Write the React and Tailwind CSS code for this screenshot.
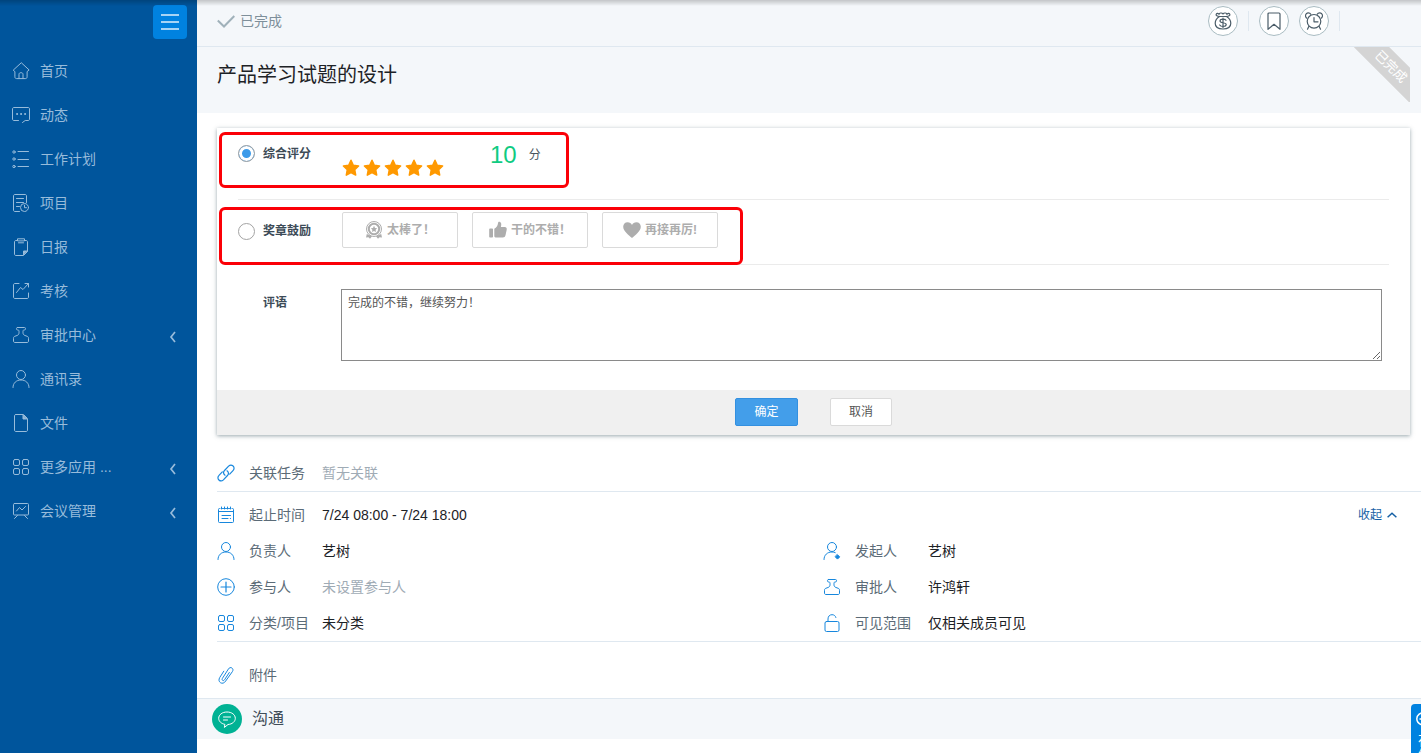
import React, { useState } from 'react';

const Icon = ({ size = 'size-[18px]', children, width = 1 }) => (
  <svg
    viewBox="0 0 18 18"
    className={`${size} shrink-0`}
    fill="none"
    stroke="currentColor"
    strokeWidth={width}
    strokeLinecap="round"
    strokeLinejoin="round"
    aria-hidden="true"
  >
    {children}
  </svg>
);

// Shapes shared by the sidebar and the task details
const shapes = {
  home: (
    <>
      <path d="M9 1 1.2 8.2l1.7 1.4v5.2c0 1.2.6 1.8 1.8 1.8h8.6c1.2 0 1.8-.6 1.8-1.8V9.6l1.7-1.4z" />
      <path d="M7 16.4v-4.2c0-.9.7-1.5 2-1.5s2 .6 2 1.5v4.2" />
    </>
  ),
  feed: (
    <>
      <path d="M6.5 14.500H2C1 14.500 .5 14 .5 13V3C.5 2 1 1.500 2 1.500h14c1 0 1.500.5 1.500 1.500v10c0 1-.5 1.500-1.500 1.500h-2.800L10.500 16.500" />
      <path d="M5 8h.2M9 8h.2M13 8h.2" strokeWidth="1.800" />
    </>
  ),
  plan: (
    <>
      <circle cx="2" cy="2" r="1.200" />
      <circle cx="2" cy="9" r="1.200" />
      <circle cx="2" cy="16.500" r="1.200" />
      <path d="M6 1.500h10.500M6 9.500h10.500M6 16.500h10.500" />
    </>
  ),
  project: (
    <>
      <path d="M7.500 17.500H3c-1 0-1.500-.5-1.500-1.500V2C1.500 1 2 .5 3 .5h10c1 0 1.500.5 1.500 1.500v6.500" />
      <path d="M4.500 4.500h7M4.500 8.500h7M4.500 12.500h3" />
      <circle cx="12.500" cy="13.500" r="4" />
      <path d="M12.500 11.200v2.500h2" />
    </>
  ),
  daily: (
    <>
      <path d="M5.500 2.500H4C3 2.500 2.500 3 2.500 4v12c0 1 .5 1.500 1.500 1.500h7.500l4-4V4c0-1-.5-1.500-1.500-1.500h-1.500" />
      <path d="M5.500 2.500V.8h7v1.700zM6.500 4.800h5" />
      <path d="M11.500 16.500v-3.500H15z" fill="currentColor" />
    </>
  ),
  review: (
    <>
      <path d="M7 1.500H3C2 1.500 1.500 2 1.500 3v12c0 1 .5 1.500 1.500 1.500h12c1 0 1.500-.5 1.500-1.500v-4" />
      <path d="m4.500 10.500 4-5 2.500 2 5.500-6M13 1.500h3.500V5" />
    </>
  ),
  approve: (
    <path d="M5.500 1.500h7c.7 0 1 .4 1 1.200 0 .9-.4 1.300-1.100 1.300-1 0-1.400.3-1.400 1.300v1.500c0 1.400.7 2.200 2 2.700l2.200.8c1 .4 1.300.9 1.300 2v2.700c0 1-.5 1.500-1.500 1.500H3c-1 0-1.500-.5-1.500-1.500v-2.700c0-1.100.3-1.600 1.300-2L5 9.500c1.300-.5 2-1.300 2-2.700V5.300C7 4.300 6.600 4 5.600 4c-.7 0-1.100-.4-1.100-1.300 0-.8.300-1.200 1-1.200z" />
  ),
  user: (
    <>
      <circle cx="9" cy="5" r="4.500" />
      <path d="M1 17.500c0-4.500 3.300-7.500 8-7.500s8 3 8 7.500" />
    </>
  ),
  file: (
    <>
      <path d="M4 .5h7.500l4 4V16c0 1-.5 1.500-1.500 1.500H4c-1 0-1.500-.5-1.500-1.500V2C2.500 1 3 .5 4 .5z" />
      <path d="M11 1.500v3.500h3.500z" fill="currentColor" />
    </>
  ),
  apps: (
    <>
      <rect x="1.500" y="1.500" width="6" height="6" rx="1.500" />
      <rect x="10.500" y="1.500" width="6" height="6" rx="1.500" />
      <rect x="1.500" y="10.500" width="6" height="6" rx="1.500" />
      <rect x="10.500" y="10.500" width="6" height="6" rx="1.500" />
    </>
  ),
  meeting: (
    <>
      <rect x="1.500" y="1.500" width="15" height="11.500" rx="1" />
      <path d="m4.500 9 3-3.500L10 8l3.500-3.500M5.500 13.500l-3 3M12.500 13.500l3 3" />
    </>
  ),
  link: (
    <g strokeWidth="1.200">
      <path d="M8 11.200c-1.800-1.300-1.900-3.300-.5-4.700l4.100-4.300c1.400-1.400 3.200-1.400 4.500-.2s1.300 3.200-.1 4.600l-3.300 3.500" />
      <path d="M10 6.800c1.800 1.300 1.900 3.300.5 4.700l-4.100 4.300C5 17.200 3.200 17.200 1.900 16s-1.300-3.200.1-4.600l3.300-3.500" />
    </g>
  ),
  calendar: (
    <>
      <path d="M3 2.500h-.5c-.7 0-1 .3-1 1v12c0 .7.3 1 1 1h13c.7 0 1-.3 1-1v-12c0-.7-.3-1-1-1H15M5.500 2.500h1M8.500 2.500h1M11.500 2.500h1M4.500 1v2M7.500 1v2M10.500 1v2M13.500 1v2M1.500 5.500h15" />
      <path d="M5 9.500h8.500M5 12.500h6M13.300 12.500h.2" />
    </>
  ),
  plus: (
    <>
      <circle cx="9" cy="9" r="8.300" />
      <path d="M9 4v10M4 9h10" strokeWidth="1.200" />
    </>
  ),
  starter: (
    <>
      <circle cx="9" cy="5" r="4.500" />
      <path d="M1 17.500c0-4.500 3.300-7.500 8-7.500 1.200 0 2.200.2 3.200.6" />
      <path d="m14.500 12.700 2.200 2.200-2.200 2.200-2.200-2.200z" fill="currentColor" />
    </>
  ),
  lock: (
    <>
      <rect x="2" y="7.500" width="14" height="10" rx="1.500" />
      <path d="M5 7.500V5c0-2.700 1.700-4.300 4-4.300 2 0 3.400 1 3.900 2.800" />
    </>
  ),
  clip: (
    <path d="m12.300 6.500-4.800 7.300c-.5.800-1.300 1-1.900.6s-.7-1.200-.2-2l6-9.400c.9-1.400 2.300-1.800 3.500-1s1.400 2.200.5 3.600L8.700 15c-1.400 2.200-3.500 2.800-5.200 1.700s-2-3.200-.7-5.300l4-6.200" />
  ),
};

const navItems = [
  { label: '首页', icon: 'home' },
  { label: '动态', icon: 'feed' },
  { label: '工作计划', icon: 'plan' },
  { label: '项目', icon: 'project' },
  { label: '日报', icon: 'daily' },
  { label: '考核', icon: 'review' },
  { label: '审批中心', icon: 'approve', expandable: true },
  { label: '通讯录', icon: 'user' },
  { label: '文件', icon: 'file' },
  { label: '更多应用 ...', icon: 'apps', expandable: true },
  { label: '会议管理', icon: 'meeting', expandable: true },
];

const Sidebar = () => (
  <aside className="w-[197px] shrink-0 bg-[#00559c] text-[#98bcdb]">
    <div className="flex h-[49px] justify-end pt-[5px] pr-[10px]">
      <button
        type="button"
        aria-label="菜单"
        className="flex size-[34px] flex-col items-center justify-center gap-[5px] rounded-sm bg-[#0082e0]"
      >
        <span className="h-[2px] w-[18px] bg-[#a6d4f5]" />
        <span className="h-[2px] w-[18px] bg-[#a6d4f5]" />
        <span className="h-[2px] w-[18px] bg-[#a6d4f5]" />
      </button>
    </div>
    <nav>
      {navItems.map((item) => (
        <a key={item.label} href="#" className="flex h-11 items-center gap-[10px] pr-5 pl-3 text-sm">
          <Icon>{shapes[item.icon]}</Icon>
          <span>{item.label}</span>
          {item.expandable && (
            <svg viewBox="0 0 10 12" className="mt-1 ml-auto h-3 w-[10px]" fill="none" stroke="currentColor" strokeWidth="1.700" aria-hidden="true">
              <path d="M8 1 4 6l4 5" />
            </svg>
          )}
        </a>
      ))}
    </nav>
  </aside>
);

const RoundButton = ({ label, children }) => (
  <button
    type="button"
    aria-label={label}
    className="flex size-[30px] items-center justify-center rounded-full border border-[#a9bcc2] bg-white text-[#4a5c68]"
  >
    {children}
  </button>
);

const TopBar = () => (
  <header className="flex h-[47px] items-center justify-between border-b border-[#dfe8f0] bg-[#f4f7fa] pr-[81px] pb-1 pl-5">
    <div className="flex items-center gap-[5px] text-sm text-[#7e8f9a]">
      <svg viewBox="0 0 18 14" className="h-[14px] w-[18px]" fill="none" stroke="#a0b1ba" strokeWidth="2" aria-hidden="true">
        <path d="m.8 6.500 6.200 6L17.300 2" />
      </svg>
      已完成
    </div>
    <div className="flex items-center gap-[10px]">
      <RoundButton label="奖金">
        <Icon width={1.2}>
          <path d="M5.500 4.500C3.500 4.300 1.500 3.500 2.200 2.200S4.500 1.300 5 2.300C5.200.8 8 .5 9 2c1-1.500 3.800-1.200 4 .3.500-1 2.100-1.400 2.800-.1s-1.300 2.100-3.300 2.300z" />
          <path d="M5.500 4.500C3 6 1.200 8.500 1.200 11.300c0 3.500 3 5.700 7.800 5.700s7.800-2.200 7.800-5.700c0-2.800-1.800-5.300-4.300-6.800" />
          <path d="M12 8.300c-.5-.8-1.500-1.200-3-1.200-1.800 0-3 .6-3 1.800 0 2.600 6.200 1.100 6.200 3.700 0 1.200-1.300 1.900-3.200 1.900-1.600 0-2.800-.5-3.300-1.500M9 6v9.500" />
        </Icon>
      </RoundButton>
      <span className="h-5 w-px bg-[#dfe8f0]" />
      <RoundButton label="收藏">
        <Icon width={1.2}>
          <path d="M4 1h10c.7 0 1 .3 1 1v15.300l-6-5-6 5V2c0-.7.300-1 1-1z" />
        </Icon>
      </RoundButton>
      <RoundButton label="提醒">
        <Icon width={1.2}>
          <circle cx="9" cy="9.300" r="6.800" />
          <path d="M1.500 6C-.3 4 .5 1.200 3 .8c1.300-.1 2.300.5 2.800 1.500M16.500 6c1.800-2 1-4.800-1.500-5.200-1.300-.1-2.300.5-2.800 1.500M3.800 14.500l-1.300 2.700M14.200 14.500l1.300 2.700M9 5.500v4.300h4" />
        </Icon>
      </RoundButton>
      <span className="h-5 w-px bg-[#dfe8f0]" />
    </div>
  </header>
);

const Star = () => (
  <svg viewBox="0 0 18 18" className="size-[18px]" fill="#ff9900" stroke="#ff9900" strokeWidth="1.500" strokeLinejoin="round" aria-hidden="true">
    <path d="m9 1.300 2.300 4.900 5.300.7-3.900 3.700 1 5.500L9 13.500l-4.700 2.600 1-5.500L1.400 6.900l5.300-.7z" />
  </svg>
);

const medals = [
  {
    label: '太棒了！',
    icon: (
      <svg viewBox="0 0 18 18" className="size-[18px]" fill="none" stroke="currentColor" aria-hidden="true">
        <circle cx="9" cy="8" r="7.500" strokeWidth="1" />
        <circle cx="9" cy="8" r="5.200" strokeWidth="2" />
        <path d="m9 4.800 1 2.100 2.200.3-1.600 1.600.4 2.300L9 10l-2 1.100.4-2.300-1.600-1.600L8 6.900z" fill="currentColor" stroke="none" />
        <path d="M1.800 13 1 16.500l2.500-.3 1.500 1.600 2-2.600M16.200 13l.8 3.500-2.500-.3-1.500 1.600-2-2.600z" fill="currentColor" stroke="none" />
      </svg>
    ),
  },
  {
    label: '干的不错！',
    icon: (
      <svg viewBox="0 0 18 18" className="size-[18px]" fill="currentColor" aria-hidden="true">
        <path d="M1 7.500h2.200c.5 0 .8.300.8.800v7.400c0 .5-.3.800-.8.800H1c-.5 0-.8-.3-.8-.8V8.300c0-.5.300-.8.800-.8zM5.300 7.800C7.500 6.500 8.700 5 9 2.200 9.200.9 9.900.5 10.700.8c1.600.5 2 2.400 1.200 5.200h3.800c1.500 0 2.300 1.100 2 2.700l-1.200 5.600c-.4 1.500-1.200 2.200-2.700 2.200H7.500c-1.200 0-2.200-.5-2.200-1.500z" />
      </svg>
    ),
  },
  {
    label: '再接再厉!',
    icon: (
      <svg viewBox="0 0 18 18" className="size-[18px]" fill="currentColor" aria-hidden="true">
        <path d="M9 17C6 14.500.2 10.300.2 5.800.2 3.200 2 1.300 4.600 1.300 6.600 1.300 8.200 2.400 9 4c.8-1.600 2.400-2.700 4.400-2.700 2.600 0 4.400 1.900 4.400 4.500C17.800 10.300 12 14.500 9 17z" />
      </svg>
    ),
  },
];

const radioClass =
  'size-[17px] shrink-0 appearance-none rounded-full border border-[#a3a3a3] bg-white checked:bg-[#3d9be9] checked:shadow-[inset_0_0_0_3px_#fff]';

const ReviewForm = () => {
  const [mode, setMode] = useState('score');
  const [comment, setComment] = useState('完成的不错，继续努力！');

  return (
    <form
      className="relative mr-[11px] ml-5 bg-white shadow-[0_1px_4px_rgba(70,95,105,0.55)]"
      onSubmit={(e) => e.preventDefault()}
    >
      <div className="px-[21px] text-xs text-[#4a5560]">
        <div className="flex h-[72px] items-start border-b border-[#ebebeb] pt-4">
          <label className="flex h-[19px] w-[104px] items-center gap-2 font-bold text-[#3d4b57]">
            <input type="radio" name="mode" className={radioClass} checked={mode === 'score'} onChange={() => setMode('score')} />
            综合评分
          </label>
          <div className="mt-[15px] flex gap-[3px]">
            {[1, 2, 3, 4, 5].map((n) => (
              <button key={n} type="button" aria-label={`${n} 星`}>
                <Star />
              </button>
            ))}
          </div>
          <span className="ml-[46px] text-2xl leading-[22px] text-[#0fcb82]">10</span>
          <span className="ml-3 leading-[22px]">分</span>
        </div>

        <div className="flex h-[65px] items-start border-b border-[#ebebeb] pt-3">
          <label className="flex h-[38px] w-[104px] items-center gap-2 font-bold text-[#3d4b57]">
            <input type="radio" name="mode" className={radioClass} checked={mode === 'medal'} onChange={() => setMode('medal')} />
            奖章鼓励
          </label>
          <div className="flex gap-[14px]">
            {medals.map((medal) => (
              <button
                key={medal.label}
                type="button"
                className="flex h-9 w-[116px] items-center justify-center gap-1 rounded-xs border border-[#dadada] font-bold text-[#adadad]"
              >
                {medal.icon}
                {medal.label}
              </button>
            ))}
          </div>
        </div>

        <div className="flex pt-6 pr-[7px] pb-[29px]">
          <label htmlFor="comment" className="w-[103px] shrink-0 pl-[25px] leading-7 font-bold text-[#3d4b57]">
            评语
          </label>
          <textarea
            id="comment"
            value={comment}
            onChange={(e) => setComment(e.target.value)}
            className="h-[72px] flex-1 border border-[#8a8a8a] px-[6px] py-[3px] leading-5 text-[#555]"
          />
        </div>
      </div>

      <div className="flex h-[45px] justify-center gap-8 bg-[#f0f0f0] pt-2 text-xs">
        <button type="submit" className="h-7 w-[63px] rounded-xs border border-[#3390e0] bg-[#439eea] text-white">
          确定
        </button>
        <button type="button" className="h-7 w-[62px] rounded-xs border border-[#dadada] bg-white text-[#555]">
          取消
        </button>
      </div>

      {/* highlight frames over the two rating modes */}
      <div className="pointer-events-none absolute top-1 left-[2px] h-14 w-[350px] rounded-md border-3 border-[#fb0007]" />
      <div className="pointer-events-none absolute top-[79px] left-[2px] h-[58px] w-[524px] rounded-md border-3 border-[#fb0007]" />
    </form>
  );
};

const Field = ({ icon, label, value, muted }) => (
  <div className="flex h-9 items-center text-sm">
    <span className="mr-[14px] text-[#1787dd]">
      <Icon>{shapes[icon]}</Icon>
    </span>
    <span className="w-[73px] text-[#5b6b77]">{label}</span>
    <span className={muted ? 'text-[#9fabb5]' : 'text-[#1d2226]'}>{value}</span>
  </div>
);

const TaskDetails = () => (
  <section className="pt-5 pl-5">
    <div className="border-b border-[#dfe8f0]">
      <Field icon="link" label="关联任务" value="暂无关联" muted />
    </div>
    <div className="border-b border-[#dfe8f0] pt-[5px]">
      <div className="flex items-center justify-between pr-6">
        <Field icon="calendar" label="起止时间" value="7/24 08:00 - 7/24 18:00" />
        <button type="button" className="flex items-center gap-[5px] text-xs text-[#1560a5]">
          收起
          <svg viewBox="0 0 10 6" className="h-[6px] w-[10px]" fill="none" stroke="currentColor" strokeWidth="1.500" aria-hidden="true">
            <path d="m.6 5.300 4.400-4 4.400 4" />
          </svg>
        </button>
      </div>
      <div className="grid grid-cols-2 gap-x-2">
        <Field icon="user" label="负责人" value="艺树" />
        <Field icon="starter" label="发起人" value="艺树" />
        <Field icon="plus" label="参与人" value="未设置参与人" muted />
        <Field icon="approve" label="审批人" value="许鸿轩" />
        <Field icon="apps" label="分类/项目" value="未分类" />
        <Field icon="lock" label="可见范围" value="仅相关成员可见" />
      </div>
    </div>
    <div className="pt-[15px] pb-[5px]">
      <Field icon="clip" label="附件" />
    </div>
  </section>
);

const App = () => (
  <div className="flex min-h-screen bg-white font-['Liberation_Sans','Noto_Sans_CJK_SC',sans-serif]">
    <Sidebar />
    <main className="min-w-0 flex-1">
      <TopBar />
      <div className="relative mb-[15px] h-[66px] bg-[#f4f7fa] pt-3 pl-5">
        <h1 className="text-xl leading-8 text-[#1d2226]">产品学习试题的设计</h1>
        <div className="absolute top-0 right-[11px] h-[55px] w-14 overflow-hidden">
          <div className="absolute top-[7px] -left-[23px] h-[25px] w-[120px] rotate-45 bg-[#d4d4d4] text-center text-[13px] leading-[26px] text-white">
            已完成
          </div>
        </div>
      </div>
      <ReviewForm />
      <TaskDetails />
      <section className="flex h-[41px] items-center gap-[10px] border-t border-[#dfe8f0] bg-[#f4f7fa] pl-[15px]">
        <span className="flex size-[30px] items-center justify-center rounded-full bg-[#00b294] text-white">
          <Icon>
            <path d="M6.500 14.300C3 13.500.7 11.200.7 8.300c0-3.600 3.600-6.300 8.300-6.300s8.300 2.700 8.300 6.300c0 3.300-3 5.900-7.300 6.200l-3.300 2.700z" />
            <path d="M5.500 7h7M5.500 10h4" />
          </Icon>
        </span>
        <h2 className="text-base text-[#3f4d58]">沟通</h2>
      </section>
    </main>

    <button
      type="button"
      className="fixed -right-[18px] bottom-0 flex h-[49px] w-7 flex-col items-center gap-1 overflow-hidden rounded-tl-sm bg-[#0082e0] pt-[7px] text-sm leading-[14px] text-white"
    >
      <Icon width={1.5}>
        <path d="M6 14C3 13 .8 10.700.8 7.800c0-3.600 3.600-6.500 8.200-6.500s8.200 2.900 8.200 6.500-3.600 6.500-8 6.500l-3 2.700zM4 8h10" />
      </Icon>
      <span className="w-[14px]">在线</span>
    </button>
    <div className="pointer-events-none fixed inset-x-0 top-0 h-[6px] bg-linear-to-b from-black/20 to-transparent" />
  </div>
);

export default App;
